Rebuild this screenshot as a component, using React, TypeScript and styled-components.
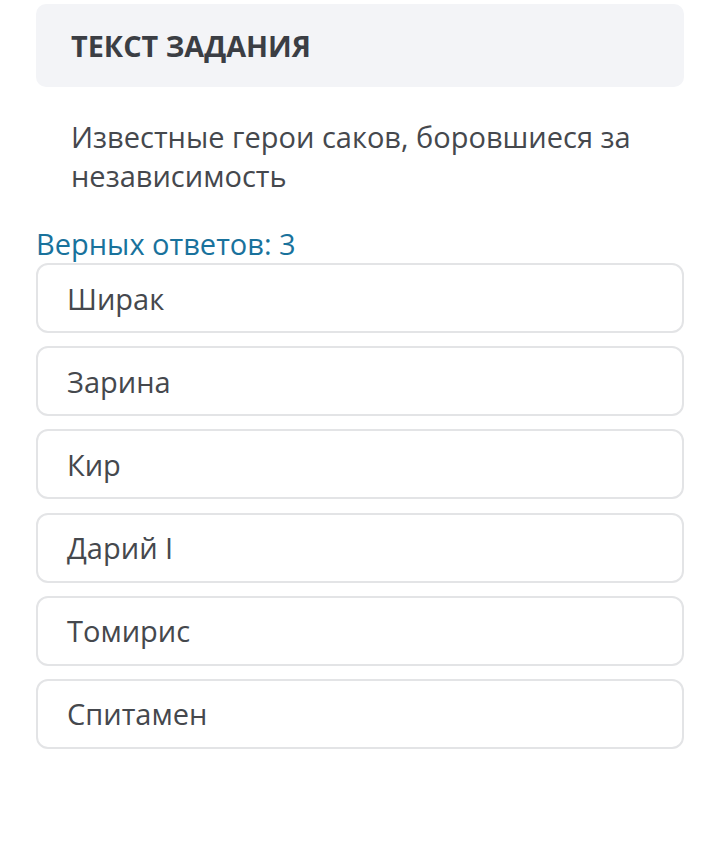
import React from "react";
import styled, { createGlobalStyle } from "styled-components";

const Global = createGlobalStyle`
  html, body { margin: 0; padding: 0; background: #ffffff; }
  body { font-family: "Open Sans", "Noto Sans", sans-serif; }
`;

const Page = styled.div`
  padding: 4px 36px 0 36px;
  display: flex;
  flex-direction: column;
`;

const Header = styled.div`
  height: 83px;
  background: #f3f4f7;
  border-radius: 10px;
  display: flex;
  align-items: center;
  padding-left: 35px;
`;

const Title = styled.h2`
  margin: 0;
  font-size: 28.8px;
  font-weight: 700;
  color: #3b3e44;
`;

const Question = styled.p`
  margin: 30px 0 0 0;
  padding: 0 35px;
  font-size: 29px;
  line-height: 39px;
  color: #45484d;
`;

const Hint = styled.div`
  margin-top: 29px;
  font-size: 29px;
  line-height: 39px;
  color: #19729c;
`;

const Options = styled.div`
  display: flex;
  flex-direction: column;
  gap: 13.2px;
`;

const Option = styled.div`
  box-sizing: border-box;
  height: 70px;
  border: 2px solid #e3e4e6;
  border-radius: 12px;
  display: flex;
  align-items: center;
  padding-left: 29px;
  font-size: 29px;
  color: #45484d;
  background: #ffffff;
`;

const answers = ["Ширак", "Зарина", "Кир", "Дарий I", "Томирис", "Спитамен"];

export default function App() {
  return (
    <>
      <Global />
      <Page>
        <Header>
          <Title>ТЕКСТ ЗАДАНИЯ</Title>
        </Header>
        <Question>Известные герои саков, боровшиеся за независимость</Question>
        <Hint>Верных ответов: 3</Hint>
        <Options>
          {answers.map((a) => (
            <Option key={a}>{a}</Option>
          ))}
        </Options>
      </Page>
    </>
  );
}
